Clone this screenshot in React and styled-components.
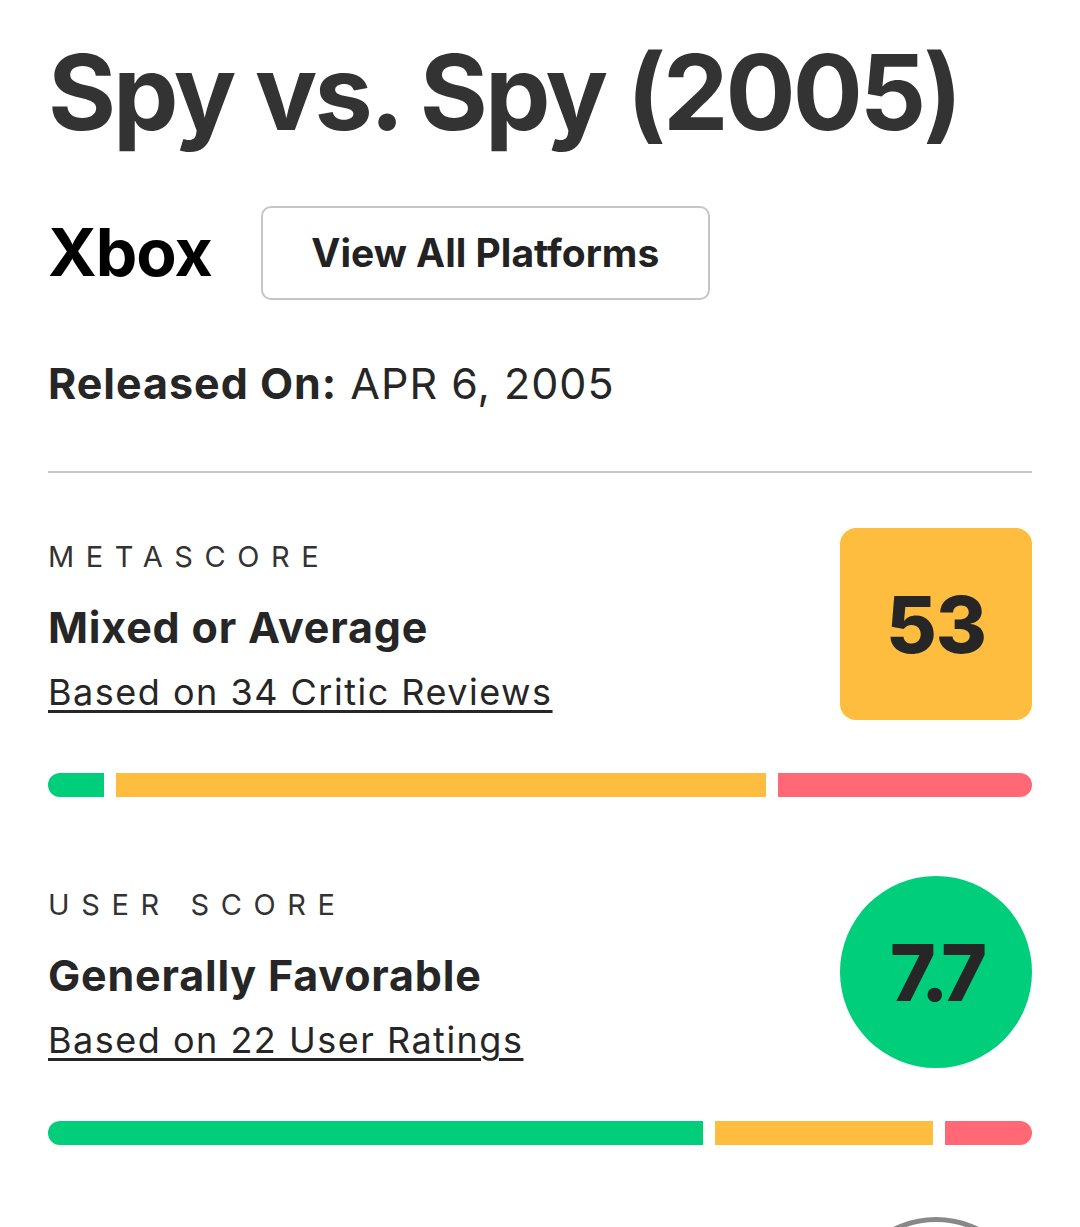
import React from 'react';
import styled, { createGlobalStyle } from 'styled-components';

const Global = createGlobalStyle`
  body {
    margin: 0;
    background: #fff;
    font-family: Inter, Lato, "Liberation Sans", sans-serif;
    color: #262626;
  }
`;

const Page = styled.div`
  padding: 0 48px;
  overflow: hidden;
  height: 1227px;
`;

const Title = styled.h1`
  margin: 30px 0 0;
  font-size: 104px;
  line-height: 1.2;
  font-weight: 700;
  color: #333;
  letter-spacing: -3px;
`;

const PlatformRow = styled.div`
  display: flex;
  align-items: center;
  gap: 49px;
  margin-top: 51px;
`;

const Platform = styled.div`
  font-size: 66px;
  line-height: 1.2;
  font-weight: 700;
  color: #000;
  letter-spacing: -1px;
`;

const PlatformButton = styled.button`
  width: 449px;
  height: 94px;
  border: 2px solid #c6c6c6;
  border-radius: 10px;
  background: #fff;
  font-family: inherit;
  font-size: 39px;
  font-weight: 700;
  color: #222;
`;

const Released = styled.div`
  margin-top: 58px;
  font-size: 43px;
  line-height: 1.2;
  letter-spacing: 1px;
  color: #262626;
  b {
    font-weight: 700;
  }
`;

const Divider = styled.hr`
  margin: 62px 0 0;
  border: none;
  height: 2px;
  background: #c8c8c8;
`;

const ScoreSection = styled.section`
  display: flex;
  justify-content: space-between;
  align-items: center;
  margin-top: ${({ top }) => top}px;
`;

const ScoreText = styled.div`
  display: flex;
  flex-direction: column;
  padding-top: 6px;
`;

const Label = styled.div`
  font-size: 29px;
  line-height: 1.2;
  letter-spacing: 0.4em;
  color: #333;
  text-transform: uppercase;
`;

const Verdict = styled.div`
  margin-top: 27px;
  font-size: 43px;
  line-height: 1.2;
  letter-spacing: 0.8px;
  font-weight: 700;
  color: #262626;
`;

const Basis = styled.a`
  margin-top: 18px;
  font-size: 36px;
  line-height: 1.2;
  letter-spacing: 1.5px;
  color: #262626;
  text-decoration: underline;
  text-decoration-thickness: 3px;
  text-underline-offset: 5px;
`;

const Badge = styled.div`
  width: 192px;
  height: 192px;
  flex-shrink: 0;
  display: flex;
  align-items: center;
  justify-content: center;
  background: ${({ color }) => color};
  border-radius: ${({ round }) => (round ? '50%' : '16px')};
  font-size: 78px;
  font-weight: 800;
  color: #262626;
  letter-spacing: ${({ round }) => (round ? '-5px' : '-1px')};
`;

const Bar = styled.div`
  display: flex;
  gap: 12px;
  height: 24px;
  margin-top: 53px;
  div:first-child {
    border-radius: 12px 0 0 12px;
  }
  div:last-child {
    border-radius: 0 12px 12px 0;
  }
`;

const Segment = styled.div`
  background: ${({ color }) => color};
`;

const RingRow = styled.div`
  display: flex;
  justify-content: flex-end;
  margin-top: 72px;
`;

const Ring = styled.div`
  width: 192px;
  height: 192px;
  border-radius: 50%;
  border: 5px solid #888;
  box-sizing: border-box;
`;

const GREEN = '#00ce7a';
const YELLOW = '#ffbd3f';
const RED = '#ff6874';

const ScoreBlock = ({ top, label, verdict, basis, score, color, round, bars }) => (
  <>
    <ScoreSection top={top}>
      <ScoreText>
        <Label>{label}</Label>
        <Verdict>{verdict}</Verdict>
        <Basis href="#">{basis}</Basis>
      </ScoreText>
      <Badge color={color} round={round}>{score}</Badge>
    </ScoreSection>
    <Bar>
      {bars.map(([c, w], i) => (
        <Segment key={i} color={c} style={{ width: w }} />
      ))}
    </Bar>
  </>
);

export default function App() {
  return (
    <>
      <Global />
      <Page>
        <Title>Spy vs. Spy (2005)</Title>
        <PlatformRow>
          <Platform>Xbox</Platform>
          <PlatformButton>View All Platforms</PlatformButton>
        </PlatformRow>
        <Released>
          <b>Released On:</b> APR 6, 2005
        </Released>
        <Divider />
        <ScoreBlock
          top={55}
          label="Metascore"
          verdict="Mixed or Average"
          basis="Based on 34 Critic Reviews"
          score="53"
          color={YELLOW}
          bars={[[GREEN, 56], [YELLOW, 650], [RED, 254]]}
        />
        <ScoreBlock
          top={79}
          label="User Score"
          verdict="Generally Favorable"
          basis="Based on 22 User Ratings"
          score="7.7"
          color={GREEN}
          round
          bars={[[GREEN, 655], [YELLOW, 218], [RED, 87]]}
        />
        <RingRow>
          <Ring />
        </RingRow>
      </Page>
    </>
  );
}
